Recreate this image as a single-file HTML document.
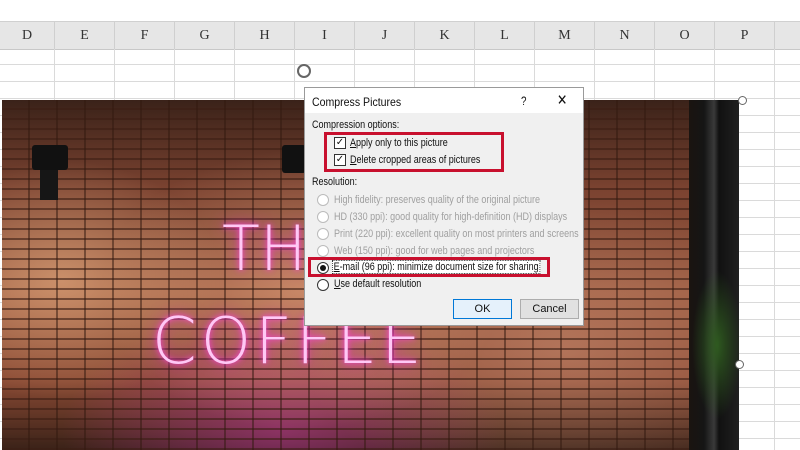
<!DOCTYPE html>
<html><head><style>
body{margin:0;width:800px;height:450px;overflow:hidden;background:#fff;font-family:"Liberation Sans",sans-serif;position:relative}
.abs{position:absolute}
.hdr{left:0;top:21px;width:800px;height:27px;background:#e6e6e6;border-top:1px solid #d0d0d0;border-bottom:1px solid #c8c8c8}
.col{position:absolute;top:0;height:27px;line-height:28px;text-align:center;font-family:"Liberation Serif",serif;font-size:14px;color:#333;border-right:1px solid #cfcfcf}
.img{left:2px;top:100px;width:737px;height:350px;overflow:hidden;
background:
 repeating-linear-gradient(90deg,transparent 0 26px,rgba(50,25,15,.5) 26px 28px),
 repeating-linear-gradient(0deg,rgba(60,30,20,.6) 0 2px,transparent 2px 10px),
 radial-gradient(ellipse 160px 120px at 60px 180px,rgba(255,200,150,.5),transparent),
 radial-gradient(ellipse 200px 140px at 300px 190px,rgba(255,190,150,.45),transparent),
 radial-gradient(ellipse 260px 150px at 560px 250px,rgba(230,170,140,.4),transparent),
 radial-gradient(ellipse 220px 120px at 280px 330px,rgba(230,60,200,.4),transparent),
 linear-gradient(180deg,#3a2219 0%,#7a4230 25%,#9a5a40 55%,#8a4a34 80%,#3a2218 100%)}
.win{right:0;top:0;width:50px;height:350px;background:linear-gradient(90deg,#1a1410,#151515 30%,#3a3a3a 50%,#111 60%,#202020)}
.dlg{left:304px;top:87px;width:278px;height:237px;background:#f0f0f0;border:1px solid #9a9a9a;font-size:11px;color:#111}
.t{position:absolute;white-space:nowrap;transform:scaleX(.82);transform-origin:0 0}
.g{color:#a0a0a0}
.rb{position:absolute;width:10px;height:10px;border:1px solid #bbb;border-radius:50%;background:#fff}
.cb{position:absolute;width:10px;height:10px;border:1px solid #333;background:#fff;font-size:10px;line-height:10px;text-align:center}
.red{position:absolute;border:3px solid #c8102e;box-sizing:border-box}
.btn{position:absolute;width:57px;height:18px;border:1px solid #adadad;background:#e1e1e1;text-align:center;line-height:18px;font-size:11px}
</style></head><body>
<div class="abs hdr">
<div class="col" style="left:0;width:54px">D</div>
<div class="col" style="left:55px;width:59px">E</div>
<div class="col" style="left:115px;width:59px">F</div>
<div class="col" style="left:175px;width:59px">G</div>
<div class="col" style="left:235px;width:59px">H</div>
<div class="col" style="left:295px;width:59px">I</div>
<div class="col" style="left:355px;width:59px">J</div>
<div class="col" style="left:415px;width:59px">K</div>
<div class="col" style="left:475px;width:59px">L</div>
<div class="col" style="left:535px;width:59px">M</div>
<div class="col" style="left:595px;width:59px">N</div>
<div class="col" style="left:655px;width:59px">O</div>
<div class="col" style="left:715px;width:59px">P</div>
</div>
<div class="abs" style="left:0;top:49px;width:800px;height:401px;
background:repeating-linear-gradient(90deg,transparent 0 54px,#dadada 54px 55px,transparent 55px 60px),repeating-linear-gradient(180deg,transparent 0 16px,#dadada 16px 17px);background-position:0 0,0 -1px"></div>
<div class="abs img">
<div class="abs win"></div>
<div class="abs" style="left:30px;top:45px;width:36px;height:25px;background:#111;border-radius:3px"></div>
<div class="abs" style="left:38px;top:70px;width:18px;height:30px;background:#161616"></div>
<div class="abs" style="left:280px;top:45px;width:24px;height:28px;background:#111;border-radius:3px"></div>
<div class="abs" style="left:220px;top:112px;font-size:62px;color:#ffc8f5;text-shadow:0 0 6px #ff40e0,0 0 16px #e020c0;font-family:'DejaVu Sans',sans-serif;font-weight:200">TH</div>
<div class="abs" style="left:150px;top:205px;font-size:64px;letter-spacing:4px;color:#ffc8f5;text-shadow:0 0 6px #ff40e0,0 0 16px #e020c0;font-family:'DejaVu Sans',sans-serif;font-weight:200">COFFEE</div>
<div class="abs" style="left:690px;top:170px;width:50px;height:150px;background:radial-gradient(ellipse,#2f5a20,transparent 70%)"></div>
</div>
<div class="abs" style="left:738px;top:96px;width:7px;height:7px;border:1px solid #666;border-radius:50%;background:#fff"></div>
<div class="abs" style="left:735px;top:360px;width:7px;height:7px;border:1px solid #666;border-radius:50%;background:#fff"></div>
<div class="abs" style="left:297px;top:64px;width:14px;height:14px;border:2px solid #666;border-radius:50%;box-sizing:border-box;background:#fff"></div>
<div class="dlg abs">
<div class="abs" style="left:0;top:0;width:278px;height:25px;background:#fff"></div>
<div class="t" style="left:7px;top:7px;font-size:12px;transform:scaleX(.88)">Compress Pictures</div>
<div class="t" style="left:216px;top:6px;font-size:12px">?</div>
<div class="t" style="left:252px;top:3px;font-size:15px">✕</div>
<div class="t" style="left:7px;top:31px">Compression options:</div>
<div class="cb" style="left:29px;top:49px">✓</div><div class="t" style="left:45px;top:49px"><u>A</u>pply only to this picture</div>
<div class="cb" style="left:29px;top:66px">✓</div><div class="t" style="left:45px;top:66px"><u>D</u>elete cropped areas of pictures</div>
<div class="red" style="left:19px;top:44px;width:180px;height:40px"></div>
<div class="t" style="left:7px;top:88px">Resolution:</div>
<div class="rb" style="left:12px;top:106px"></div><div class="t g" style="left:29px;top:106px">High fidelity: preserves quality of the original picture</div>
<div class="rb" style="left:12px;top:123px"></div><div class="t g" style="left:29px;top:123px">HD (330 ppi): good quality for high-definition (HD) displays</div>
<div class="rb" style="left:12px;top:140px"></div><div class="t g" style="left:29px;top:140px">Print (220 ppi): excellent quality on most printers and screens</div>
<div class="rb" style="left:12px;top:157px"></div><div class="t g" style="left:29px;top:157px">Web (150 ppi): good for web pages and projectors</div>
<div class="rb" style="left:12px;top:174px;border-color:#333"><div style="margin:2px;width:6px;height:6px;border-radius:50%;background:#111"></div></div>
<div class="t" style="left:27px;top:172px;border:1px dotted #333;padding:0 1px;background:#fff"><u>E</u>-mail (96 ppi): minimize document size for sharing</div>
<div class="red" style="left:3px;top:169px;width:242px;height:20px"></div>
<div class="rb" style="left:12px;top:191px;border-color:#333"></div><div class="t" style="left:29px;top:190px"><u>U</u>se default resolution</div>
<div class="btn" style="left:148px;top:211px;border:1px solid #0078d7;background:#e5f1fb">OK</div>
<div class="btn" style="left:215px;top:211px">Cancel</div>
</div>
</body></html>
